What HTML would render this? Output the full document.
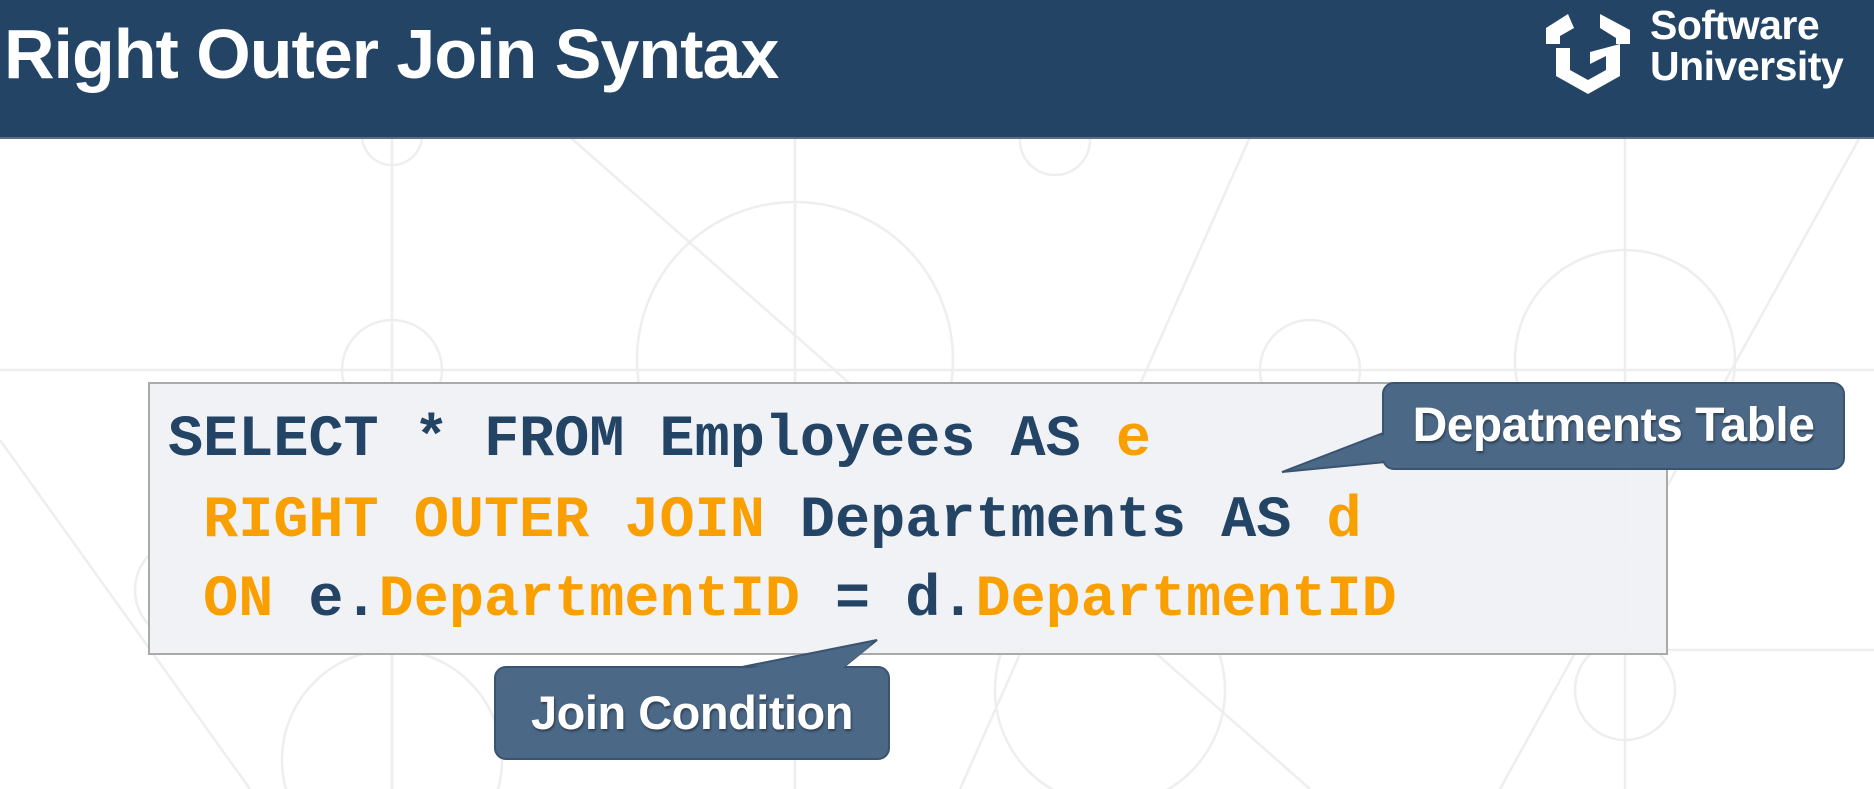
<!DOCTYPE html>
<html style="overflow:hidden;width:1874px;height:789px"><head><meta charset="utf-8"><style>
body{margin:0;width:1874px;height:789px;overflow:hidden;background:#fff;position:relative;font-family:"Liberation Sans",sans-serif}
.hdr{position:absolute;left:0;top:0;width:1874px;height:137px;background:#234465;border-bottom:2px solid #5a6f84}
.title{position:absolute;left:4px;top:14px;color:#fff;font-size:70px;font-weight:bold;letter-spacing:-1px}
.logo{position:absolute;left:1538px;top:8px}
.lt{position:absolute;left:1650px;top:5px;color:#fff;font-weight:bold;font-size:41px;line-height:41px;letter-spacing:-0.5px}
.code{position:absolute;left:148px;top:382px;width:1520px;height:273px;background:#f0f2f5;border:2px solid #a8a8a8;box-sizing:border-box;opacity:.97}
.ln{position:absolute;left:168px;font-family:"Liberation Mono",monospace;font-weight:bold;font-size:58.5px;color:#234465;white-space:pre}
.o{color:#f9a000}
.call{position:absolute;background:#4b6886;border:2px solid #3a5470;border-radius:12px;color:#fff;font-weight:bold;box-sizing:border-box;text-align:center;text-shadow:1px 2px 2px rgba(0,0,0,.4);white-space:nowrap}
</style></head><body>
<svg style="position:absolute;left:0;top:0" width="1874" height="789">
<g fill="none" stroke="#eeeeee" stroke-width="2.5">
<circle cx="795" cy="360" r="158"/>
<circle cx="392" cy="370" r="50"/>
<circle cx="392" cy="760" r="110"/>
<circle cx="1110" cy="690" r="115"/>
<circle cx="1310" cy="370" r="50"/>
<circle cx="1625" cy="360" r="110"/>
<circle cx="1625" cy="690" r="50"/>
<circle cx="185" cy="590" r="50"/>
<circle cx="392" cy="135" r="30"/>
<circle cx="1055" cy="140" r="35"/>
<line x1="392" y1="137" x2="392" y2="789"/>
<line x1="795" y1="137" x2="795" y2="789"/>
<line x1="1625" y1="137" x2="1625" y2="789"/>
<line x1="0" y1="370" x2="1874" y2="370"/>
<line x1="570" y1="137" x2="1310" y2="789"/>
<line x1="1250" y1="137" x2="960" y2="789"/>
<line x1="1860" y1="137" x2="1500" y2="789"/>
<line x1="0" y1="440" x2="250" y2="789"/>
<line x1="1000" y1="650" x2="1874" y2="650"/>
</g></svg>
<div class="hdr"></div>
<div class="title">Right Outer Join Syntax</div>
<svg class="logo" width="100" height="90" viewBox="0 0 100 90">
<path d="M30 6 L8 20 L8 36 L22 36 L22 28 L36 20 Z" fill="#fff"/>
<path d="M62 6 L92 22 L92 36 L78 36 L78 30 L62 20 Z" fill="#fff"/>
<path d="M18 40 L32 40 L32 62 L50 72 L68 62 L68 48 L52 56 L52 44 L82 36 L82 68 L50 86 L18 68 Z" fill="#fff"/>
</svg>
<div class="lt">Software<br>University</div>
<div class="code"></div>
<div class="ln" style="top:406px">SELECT * FROM Employees AS <span class="o">e</span></div>
<div class="ln" style="top:487px"> <span class="o">RIGHT OUTER JOIN</span> Departments AS <span class="o">d</span></div>
<div class="ln" style="top:566px"> <span class="o">ON</span> e.<span class="o">DepartmentID</span> = d.<span class="o">DepartmentID</span></div>
<svg style="position:absolute;left:0;top:0" width="1874" height="789">
<polygon points="1386,432 1386,462 1282,472" fill="#4b6886" stroke="#3a5470" stroke-width="2"/>
<polygon points="727,670 840,670 877,640" fill="#4b6886" stroke="#3a5470" stroke-width="2"/>
</svg>
<div class="call" style="left:1382px;top:382px;width:463px;height:88px;font-size:48px;line-height:84px;letter-spacing:-0.5px">Depatments Table</div>
<div class="call" style="left:494px;top:666px;width:396px;height:94px;font-size:47px;line-height:90px;letter-spacing:-0.5px">Join Condition</div>
<svg style="position:absolute;left:0;top:0" width="1874" height="789">
<polygon points="1388,434 1388,460 1290,470" fill="#4b6886"/>
<polygon points="730,672 838,672 872,645" fill="#4b6886"/>
</svg>
</body></html>
